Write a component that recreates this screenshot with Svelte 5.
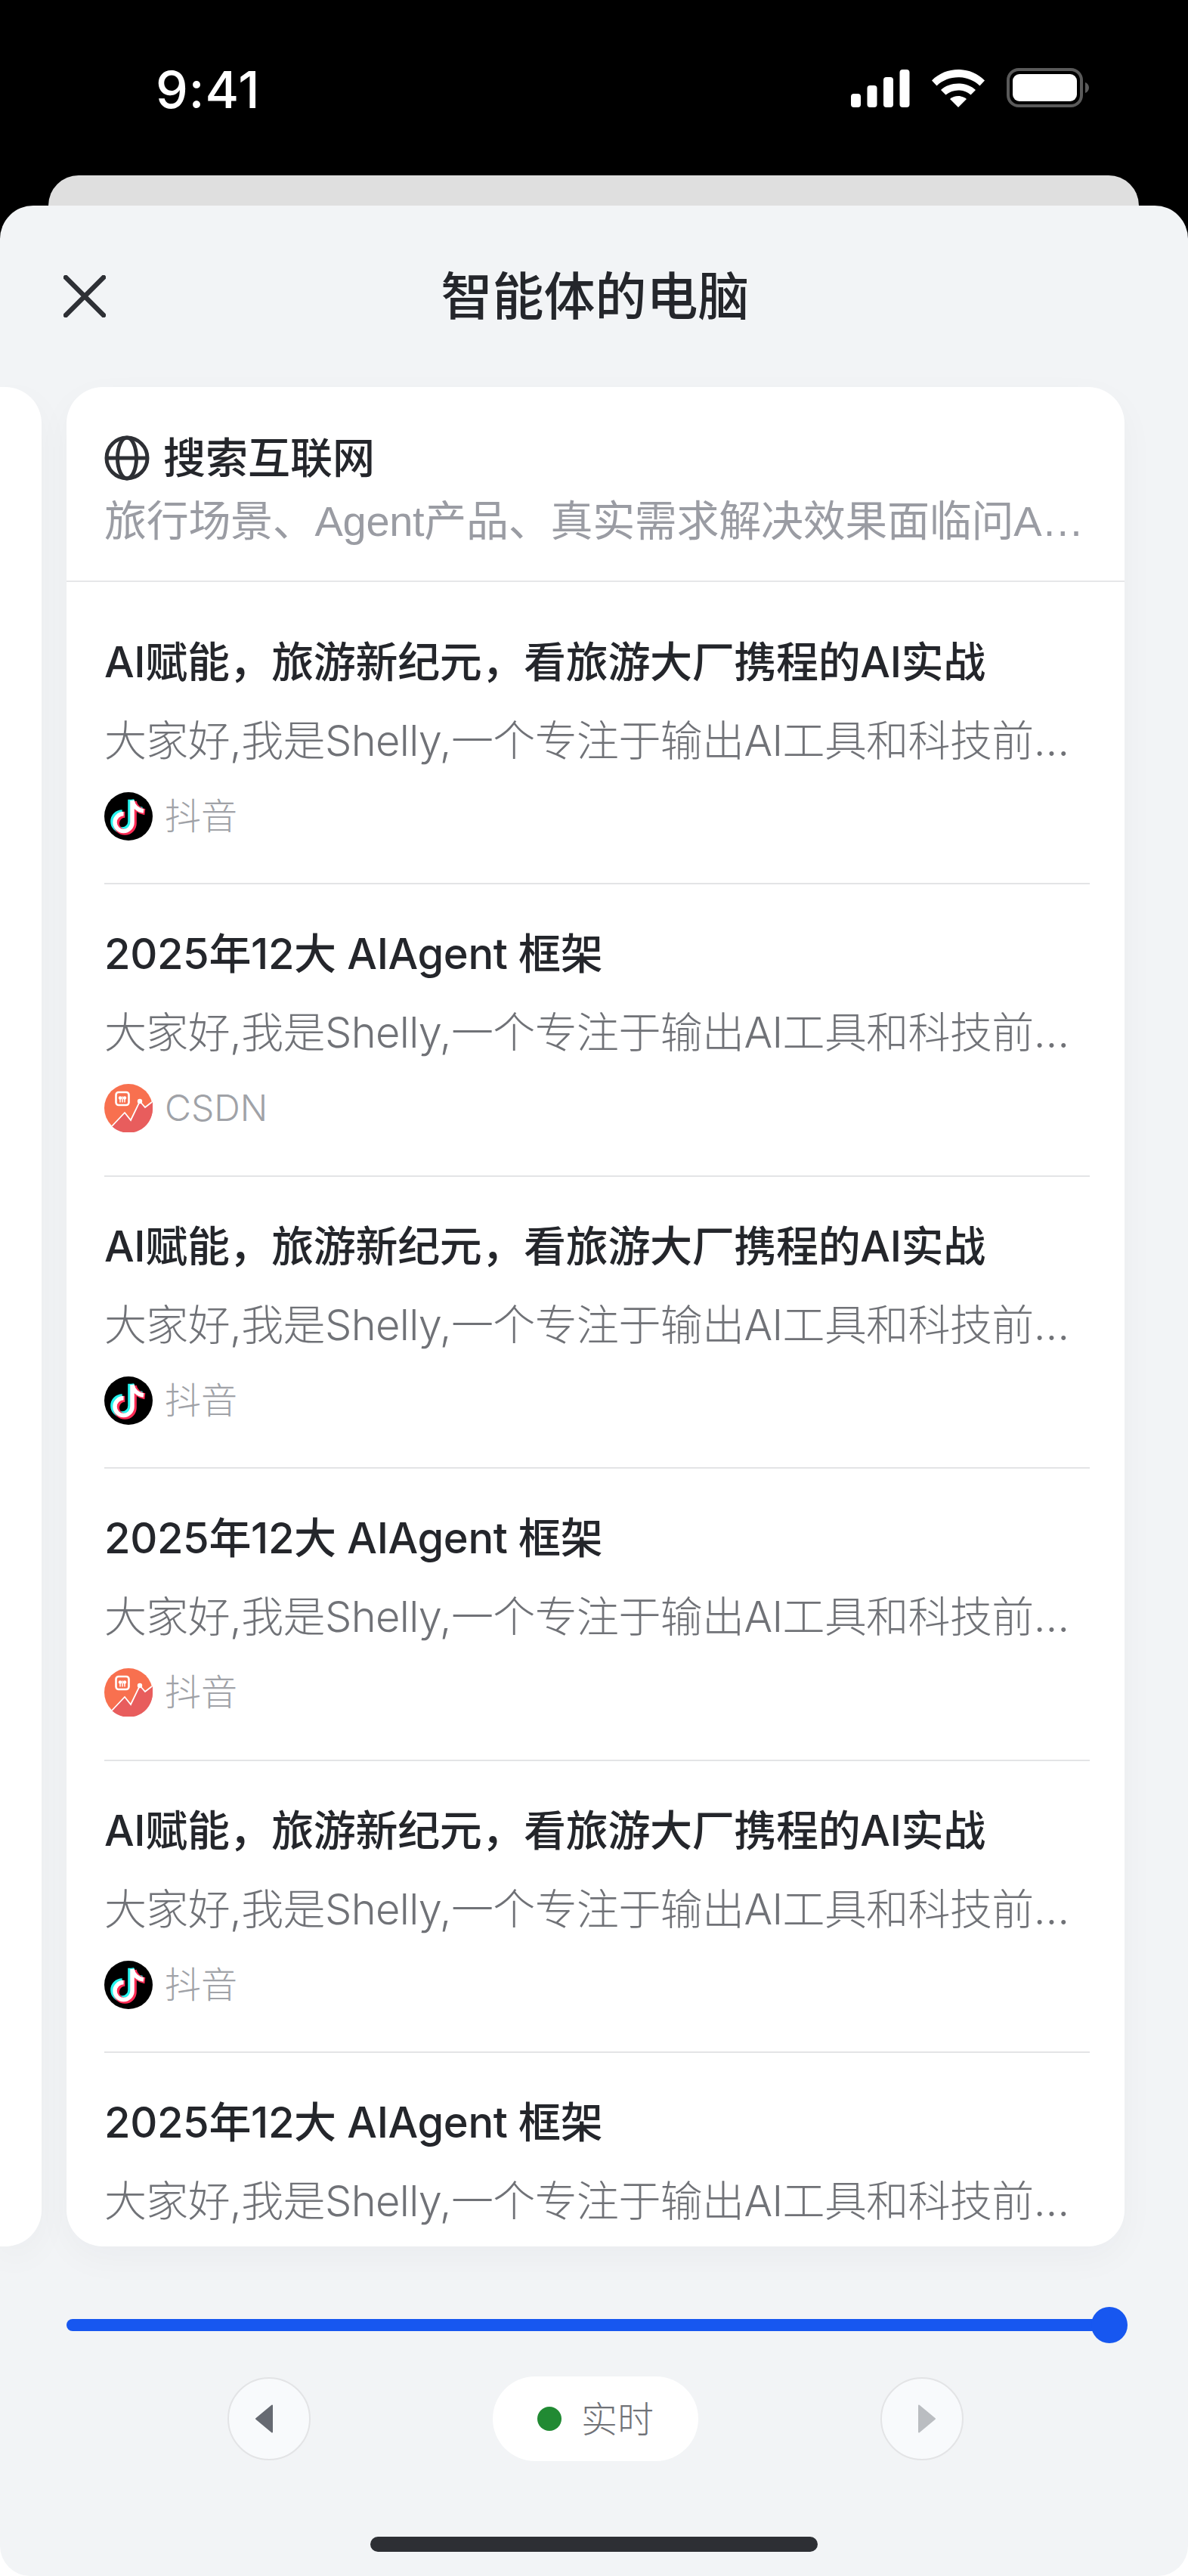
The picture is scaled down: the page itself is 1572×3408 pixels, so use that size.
<script lang="ts">
  const TIKTOK = 'tiktok'
  const CSDN = 'csdn'
  const titleA = 'AI赋能，旅游新纪元，看旅游大厂携程的AI实战'
  const titleB = '2025年12大 AIAgent 框架'
  const desc = '大家好,我是Shelly,一个专注于输出AI工具和科技前沿内容的博主,今天来聊聊旅游行业'

  const results = [
    { title: titleA, icon: TIKTOK, source: '抖音' },
    { title: titleB, icon: CSDN, source: 'CSDN' },
    { title: titleA, icon: TIKTOK, source: '抖音' },
    { title: titleB, icon: CSDN, source: '抖音' },
    { title: titleA, icon: TIKTOK, source: '抖音' },
    { title: titleB, icon: CSDN, source: '抖音' }
  ]
</script>

<div class="screen">
  <div class="status">
    <span class="time">9:41</span>
    <div class="status-icons">
      <svg width="78" height="50" viewBox="0 0 78 50" fill="#fff">
        <rect x="0" y="32" width="13" height="18" rx="4" />
        <rect x="21.5" y="21" width="13" height="29" rx="4" />
        <rect x="43" y="10" width="13" height="40" rx="4" />
        <rect x="64.5" y="0" width="13" height="50" rx="4" />
      </svg>
      <svg class="wifi" width="70" height="50" viewBox="0 0 70 50" fill="#fff">
        <path d="M0 14.500 C19 -4.800 51 -4.800 70 14.500 L63.500 21.500 C48 6.500 22 6.500 6.500 21.500 Z" />
        <path d="M12 27 C24 15.500 46 15.500 58 27 L51.500 33.500 C42 25.500 28 25.500 18.500 33.500 Z" />
        <path d="M24 39 C30 33.800 40 33.800 46 39 L35 50 Z" />
      </svg>
      <svg class="battery" width="110" height="52" viewBox="0 0 110 52">
        <rect x="2" y="2" width="97" height="48" rx="14" fill="none" stroke="#5a5a5a" stroke-width="4" />
        <rect x="8" y="8" width="85" height="36" rx="9" fill="#fff" />
        <path d="M104 19 C107 20 109 23 109 26 C109 29 107 32 104 33 Z" fill="#5a5a5a" />
      </svg>
    </div>
  </div>

  <div class="back-sheet"></div>

  <div class="sheet">
    <header class="nav">
      <svg class="close" width="56" height="56" viewBox="0 0 56 56" fill="none" stroke="#2e3035" stroke-width="6.500" stroke-linecap="round">
        <path d="M3 3 L53 53 M53 3 L3 53" />
      </svg>
      <h1>智能体的电脑</h1>
    </header>

    <div class="cards">
      <div class="card-peek"></div>
      <section class="card">
        <div class="card-head">
          <div class="card-title">
            <svg width="60" height="60" viewBox="0 0 60 60" fill="none" stroke="#2e3035" stroke-width="5">
              <circle cx="30" cy="30" r="27" />
              <ellipse cx="30" cy="30" rx="12.500" ry="27" />
              <path d="M3 30 H57" />
            </svg>
            <span>搜索互联网</span>
          </div>
          <p class="query">旅行场景、Agent产品、真实需求解决效果面临问AI的关键问题与发展方向</p>
        </div>

        <ul class="results">
          {#each results as item}
            <li class="result">
              <div class="result-title">{item.title}</div>
              <p class="desc">{desc}</p>
              <div class="source">
                {#if item.icon === TIKTOK}
                  <svg width="64" height="64" viewBox="0 0 64 64">
                    <circle cx="32" cy="32" r="32" fill="#000" />
                    <g fill="none" stroke-width="8">
                      <path d="M37 11 V40 A11.500 11.500 0 1 1 25.500 28.500 M37 11 C38 18 44 24 52 25" stroke="#25f4ee" transform="translate(-1.800 -1.200)" />
                      <path d="M37 11 V40 A11.500 11.500 0 1 1 25.500 28.500 M37 11 C38 18 44 24 52 25" stroke="#fe2c55" transform="translate(1.800 1.200)" />
                      <path d="M37 11 V40 A11.500 11.500 0 1 1 25.500 28.500 M37 11 C38 18 44 24 52 25" stroke="#fff" stroke-width="5.500" />
                    </g>
                  </svg>
                {:else}
                  <svg width="64" height="64" viewBox="0 0 64 64">
                    <circle cx="32" cy="32" r="32" fill="#f8704f" />
                    <path d="M10 56 L27 38 L35 48 L47 23 L54 31 L64 24 V32 A32 32 0 0 1 10 56 Z" fill="#e85d5d" />
                    <path d="M10 56 L27 38 L35 48 L47 23 L54 31 L63 24" fill="none" stroke="#fff" stroke-width="1.800" />
                    <circle cx="47" cy="23" r="3.200" fill="#fff" />
                    <rect x="15.500" y="11" width="17" height="17" rx="3.500" fill="none" stroke="#fff" stroke-width="2.600" />
                    <circle cx="21" cy="18.500" r="2.200" fill="#fff" />
                    <circle cx="27" cy="18.500" r="2.200" fill="#fff" />
                    <path d="M21 18.500 V24.500 M27 18.500 V24.500 M24 16.500 V24.500" stroke="#fff" stroke-width="1.500" />
                  </svg>
                {/if}
                <span>{item.source}</span>
              </div>
            </li>
          {/each}
        </ul>
      </section>
    </div>

    <div class="slider">
      <div class="track"></div>
      <div class="thumb"></div>
    </div>

    <div class="controls">
      <button class="round prev" aria-label="上一步">
        <svg width="26" height="38" viewBox="0 0 26 38"><path d="M23 1.500 V36.500 L2 19 Z" fill="#666a72" stroke="#666a72" stroke-width="2" stroke-linejoin="round" /></svg>
      </button>
      <div class="live">
        <i class="dot"></i>
        <span>实时</span>
      </div>
      <button class="round next" aria-label="下一步">
        <svg width="26" height="38" viewBox="0 0 26 38"><path d="M3 1.500 V36.500 L24 19 Z" fill="#babdc1" stroke="#babdc1" stroke-width="2" stroke-linejoin="round" /></svg>
      </button>
    </div>

    <div class="home-bar"></div>
  </div>
</div>

<style>
  :global(body) {
    margin: 0;
    background: #000;
  }

  .screen {
    width: 1572px;
    height: 3408px;
    display: flex;
    flex-direction: column;
    overflow: hidden;
    background: linear-gradient(#000 50%, #fff 50%);
    font-family: Inter, "Noto Sans CJK SC", sans-serif;
  }

  .status {
    height: 232px;
    flex: none;
    box-sizing: border-box;
    padding: 76px 130px 0 206px;
    display: flex;
    justify-content: space-between;
    align-items: flex-start;
    color: #fff;
  }

  .time {
    font-size: 68px;
    line-height: 84px;
    font-weight: 500;
    letter-spacing: 1px;
  }

  .status-icons {
    display: flex;
    align-items: flex-start;
    margin-top: 16px;
  }

  .wifi {
    margin-left: 29px;
  }

  .battery {
    margin-left: 29px;
    margin-top: -2px;
  }

  .back-sheet {
    height: 40px;
    flex: none;
    margin: 0 65px 0 64px;
    background: #dfdfdf;
    border-radius: 40px 40px 0 0;
  }

  .sheet {
    flex: 1;
    display: flex;
    flex-direction: column;
    background: #f2f4f6;
    border-radius: 44px 44px 40px 40px;
    overflow: hidden;
  }

  .nav {
    height: 240px;
    flex: none;
    position: relative;
    display: flex;
    justify-content: center;
    align-items: center;
  }

  .close {
    position: absolute;
    left: 84px;
    top: 92px;
  }

  .nav h1 {
    margin: -1px 0 0 3px;
    font-size: 68px;
    line-height: 80px;
    font-weight: 500;
    color: #24262b;
  }

  .cards {
    height: 2460px;
    flex: none;
    display: flex;
    gap: 33px;
  }

  .card-peek {
    width: 55px;
    flex: none;
    background: #fff;
    border-radius: 0 48px 48px 0;
    box-shadow: 0 16px 48px rgba(30, 40, 60, 0.035);
  }

  .card {
    width: 1400px;
    flex: none;
    background: #fff;
    border-radius: 48px;
    overflow: hidden;
    box-shadow: 0 16px 48px rgba(30, 40, 60, 0.035);
  }

  .card-head {
    height: 258px;
    box-sizing: border-box;
    padding: 62px 46px 0 50px;
    border-bottom: 2px solid #e6e7e9;
  }

  .card-title {
    display: flex;
    align-items: center;
    gap: 18px;
    font-size: 56px;
    line-height: 64px;
    font-weight: 500;
    color: #24262b;
  }

  .query {
    margin: 16px 0 0;
    font-family: "Liberation Sans", "Noto Sans CJK SC", sans-serif;
    font-size: 56px;
    line-height: 72px;
    letter-spacing: -0.3px;
    color: #9a9ca3;
    white-space: nowrap;
    overflow: hidden;
    text-overflow: ellipsis;
  }

  .results {
    list-style: none;
    margin: 0 46px 0 50px;
    padding: 0;
  }

  .result {
    height: 386.500px;
    box-sizing: border-box;
    padding-top: 56px;
    border-bottom: 2px solid #e3e4e6;
  }

  .result:first-child {
    height: 400px;
    padding-top: 70px;
  }

  .result-title {
    font-size: 56px;
    line-height: 72px;
    font-weight: 500;
    letter-spacing: -0.35px;
    color: #24262b;
    white-space: nowrap;
  }

  .desc {
    margin: 32px 0 0;
    font-size: 56px;
    line-height: 72px;
    font-weight: 300;
    letter-spacing: -0.65px;
    color: #707277;
    white-space: nowrap;
    overflow: hidden;
    text-overflow: ellipsis;
  }

  .source {
    margin-top: 32px;
    display: flex;
    align-items: center;
    gap: 16px;
    font-size: 48px;
    line-height: 64px;
    font-weight: 300;
    color: #a0a2a7;
  }

  .slider {
    position: relative;
    flex: none;
    height: 48px;
    margin: 80px 80px 0 88px;
  }

  .track {
    position: absolute;
    left: 0;
    right: 20px;
    top: 16px;
    height: 16px;
    background: #1757f0;
    border-radius: 8px;
  }

  .thumb {
    position: absolute;
    right: 0;
    top: 0;
    width: 48px;
    height: 48px;
    background: #1757f0;
    border-radius: 50%;
  }

  .controls {
    flex: none;
    margin-top: 44px;
    padding: 0 297px 0 301px;
    display: flex;
    justify-content: space-between;
    align-items: center;
  }

  .round {
    width: 110px;
    height: 110px;
    padding: 0;
    box-sizing: border-box;
    display: flex;
    justify-content: center;
    align-items: center;
    background: #f8fafc;
    border: 2px solid #e3e4e6;
    border-radius: 50%;
  }

  .prev svg {
    margin-right: 12px;
  }

  .next svg {
    margin-left: 12px;
  }

  .live {
    width: 272px;
    height: 112px;
    display: flex;
    justify-content: center;
    align-items: center;
    gap: 26px;
    background: #fff;
    border-radius: 56px;
    font-size: 48px;
    font-weight: 300;
    color: #707277;
  }

  .live span {
    margin-top: -6px;
  }

  .dot {
    width: 32px;
    height: 32px;
    background: #218a33;
    border-radius: 50%;
  }

  .home-bar {
    width: 592px;
    height: 20px;
    flex: none;
    margin: 100px auto 0;
    background: #2d2f34;
    border-radius: 10px;
  }
</style>
